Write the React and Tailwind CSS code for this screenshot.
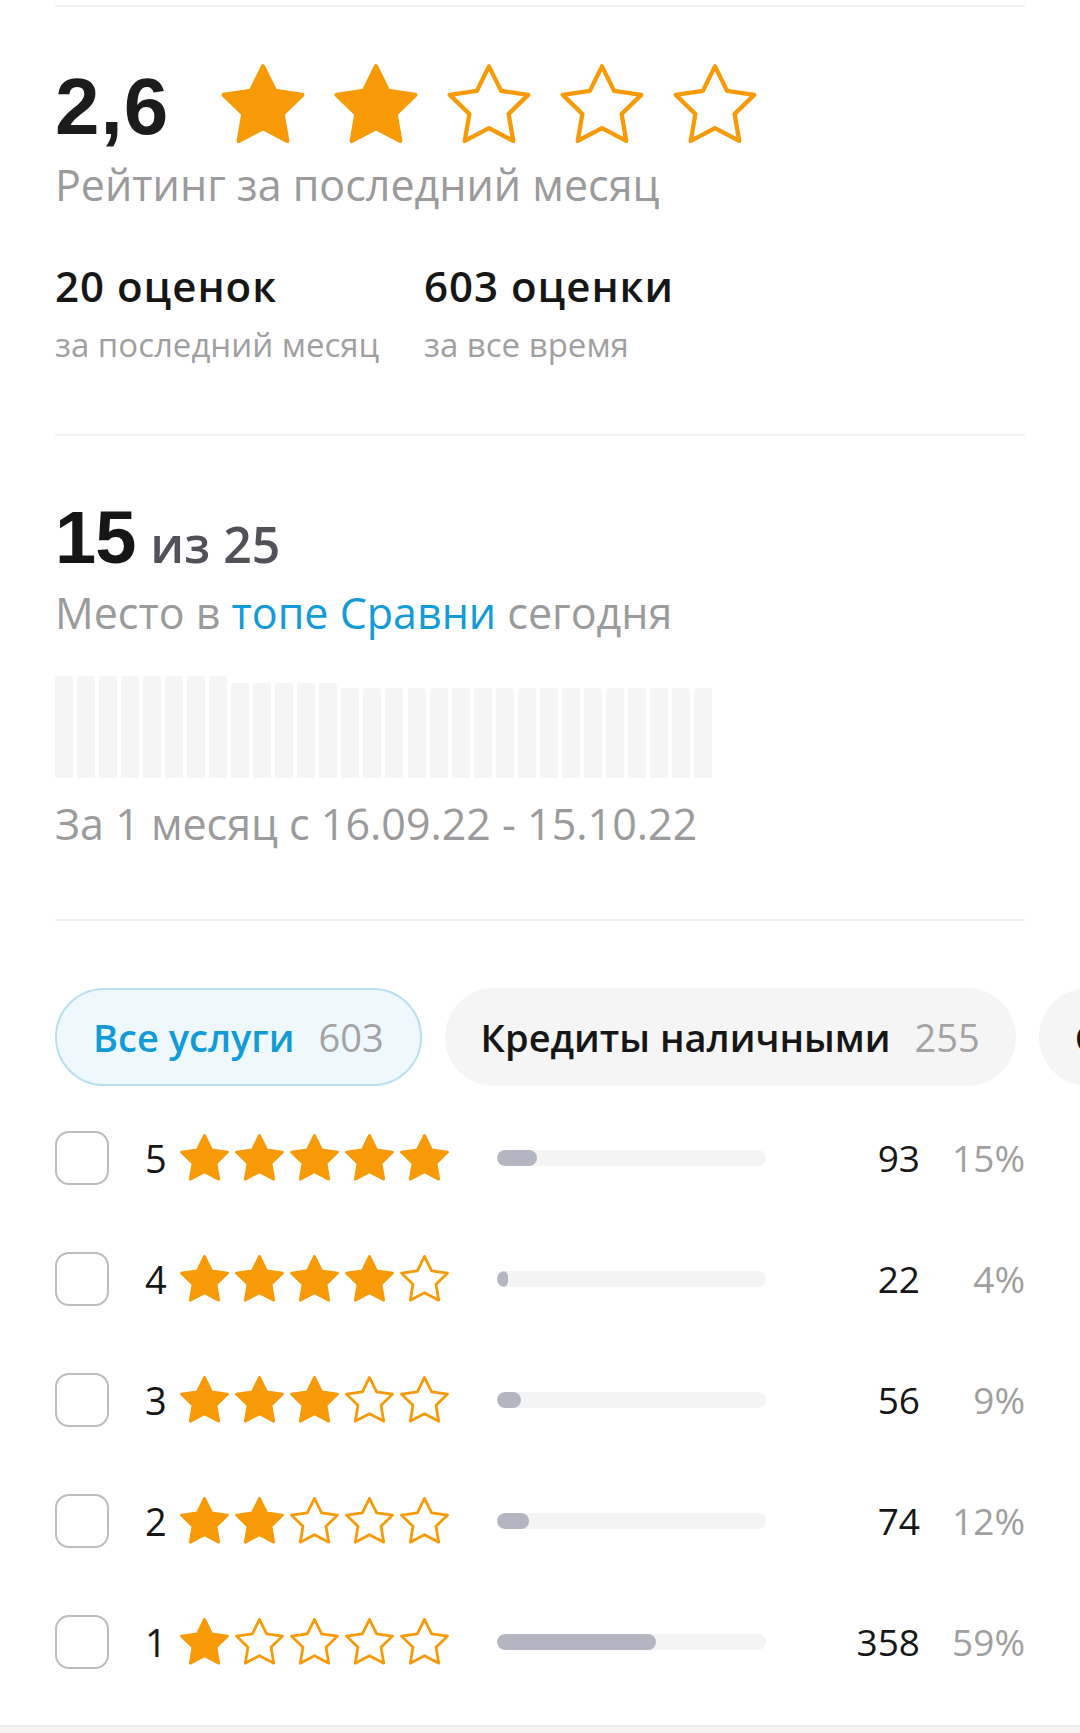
import React from 'react';

const ORANGE = '#F79A06';

// star polygon in a 24 grid, cropped by viewBox
const STAR = '12,2 15.09,8.26 22,9.27 17,14.14 18.18,21.02 12,17.77 5.82,21.02 7,14.14 2,9.27 8.91,8.26';

const Star = ({ filled, className, stroke = 1.1 }) => (
  <svg viewBox="1.4 1.4 21.2 20.4" className={className}>
    <polygon
      points={STAR}
      fill={filled ? ORANGE : '#ffffff'}
      stroke={ORANGE}
      strokeWidth={stroke}
      strokeLinejoin="round"
    />
  </svg>
);

const chartBars = Array.from({ length: 30 }).map((_, i) => (i < 8 ? 102 : i < 13 ? 95 : 90));

const rows = [
  { stars: 5, count: 93, pct: 15 },
  { stars: 4, count: 22, pct: 4 },
  { stars: 3, count: 56, pct: 9 },
  { stars: 2, count: 74, pct: 12 },
  { stars: 1, count: 358, pct: 59 }
];

const open = { fontFamily: '"Open Sans", "Noto Sans", sans-serif' };
const arial = { fontFamily: '"Liberation Sans", Arial, sans-serif' };

export default function App() {
  return (
    <div className="w-[1080px] h-[1733px] bg-white overflow-hidden flex flex-col" style={open}>
      <div className="px-[55px] flex flex-col">
        <div className="mt-[5px] h-[2px] bg-[#F2F2F2]" />

        {/* rating */}
        <div className="mt-[57px] flex items-start">
          <span className="mt-[3px] text-[80px] leading-none font-bold text-[#1C1C1C] tracking-[1px]" style={arial}>
            2,6
          </span>
          <div className="ml-[52px] flex gap-[29px]">
            {[1, 2, 3, 4, 5].map(i => (
              <Star key={i} filled={i <= 2} className="w-[84px] h-[80px]" stroke={1.1} />
            ))}
          </div>
        </div>
        <div className="mt-[16px] text-[43px] leading-none text-[#9B9B9B]">Рейтинг за последний месяц</div>

        <div className="mt-[59px] flex">
          <div className="w-[369px] flex flex-col">
            <span className="text-[42px] leading-none font-semibold text-[#161616] tracking-[1px]">20 оценок</span>
            <span className="mt-[21px] text-[33px] leading-none text-[#A0A0A0]">за последний месяц</span>
          </div>
          <div className="flex flex-col">
            <span className="text-[42px] leading-none font-semibold text-[#161616] tracking-[1px]">603 оценки</span>
            <span className="mt-[21px] text-[33px] leading-none text-[#A0A0A0]">за все время</span>
          </div>
        </div>

        <div className="mt-[73px] h-[2px] bg-[#F2F2F2]" />

        {/* place in top */}
        <div className="mt-[65px] flex items-baseline gap-[15px]">
          <span className="text-[74px] leading-none font-bold text-[#161616] tracking-[-1px]" style={arial}>15</span>
          <span className="text-[50px] leading-none font-semibold text-[#505258]">из 25</span>
        </div>
        <div className="mt-[16px] text-[43px] leading-none text-[#9B9B9B]">
          Место в <span className="text-[#129BD6]">топе Сравни</span> сегодня
        </div>

        <div className="mt-[42px] w-[657px] h-[102px] flex items-end justify-between">
          {chartBars.map((h, i) => (
            <div key={i} className="w-[18px] bg-[#F5F5F5] rounded-t-[3px]" style={{ height: h }} />
          ))}
        </div>

        <div className="mt-[24px] text-[43px] leading-none text-[#9B9B9B]">За 1 месяц с 16.09.22 - 15.10.22</div>

        <div className="mt-[74px] h-[2px] bg-[#F2F2F2]" />
      </div>

      {/* service pills */}
      <div className="mt-[67px] pl-[55px] flex gap-[23px] whitespace-nowrap">
        <div className="shrink-0 h-[98px] px-[36px] rounded-full border-2 border-[#B7E1EF] bg-[#EFF9FD] flex items-center gap-[24px] text-[38px] leading-none">
          <span className="font-semibold text-[#129BD6]">Все услуги</span>
          <span className="text-[#A3A3A3]">603</span>
        </div>
        <div className="shrink-0 h-[98px] px-[36px] rounded-full bg-[#F5F5F5] flex items-center gap-[24px] text-[38px] leading-none">
          <span className="font-semibold text-[#161616]">Кредиты наличными</span>
          <span className="text-[#A3A3A3]">255</span>
        </div>
        <div className="shrink-0 h-[98px] px-[36px] rounded-full bg-[#F5F5F5] flex items-center gap-[24px] text-[38px] leading-none">
          <span className="font-semibold text-[#161616]">Страхование</span>
          <span className="text-[#A3A3A3]">45</span>
        </div>
      </div>

      {/* distribution */}
      <div className="mt-[11px] px-[55px] flex flex-col">
        {rows.map(r => (
          <div key={r.stars} className="h-[121px] flex items-center">
            <div className="w-[54px] h-[54px] rounded-[14px] border-2 border-[#BDBDBD] shrink-0" />
            <span className="ml-[36px] w-[24px] text-[38px] leading-none text-[#161616]">{r.stars}</span>
            <div className="ml-[11px] flex gap-[6px]">
              {[1, 2, 3, 4, 5].map(i => (
                <Star key={i} filled={i <= r.stars} className="w-[49px] h-[47px]" stroke={1.2} />
              ))}
            </div>
            <div className="ml-[48px] w-[269px] h-[16px] rounded-full bg-[#F4F4F4] overflow-hidden">
              <div className="h-full rounded-full bg-[#B3B5C0]" style={{ width: `${Math.max(r.pct, 3)}%` }} />
            </div>
            <span className="flex-1 text-right text-[37px] leading-none text-[#161616]">{r.count}</span>
            <span className="w-[105px] text-right text-[37px] leading-none text-[#A0A0A0]">{r.pct}%</span>
          </div>
        ))}
      </div>

      <div className="mt-[23px] flex-1 border-t-2 border-[#ECECEC] bg-[#F5F4F2]" />
    </div>
  );
}
